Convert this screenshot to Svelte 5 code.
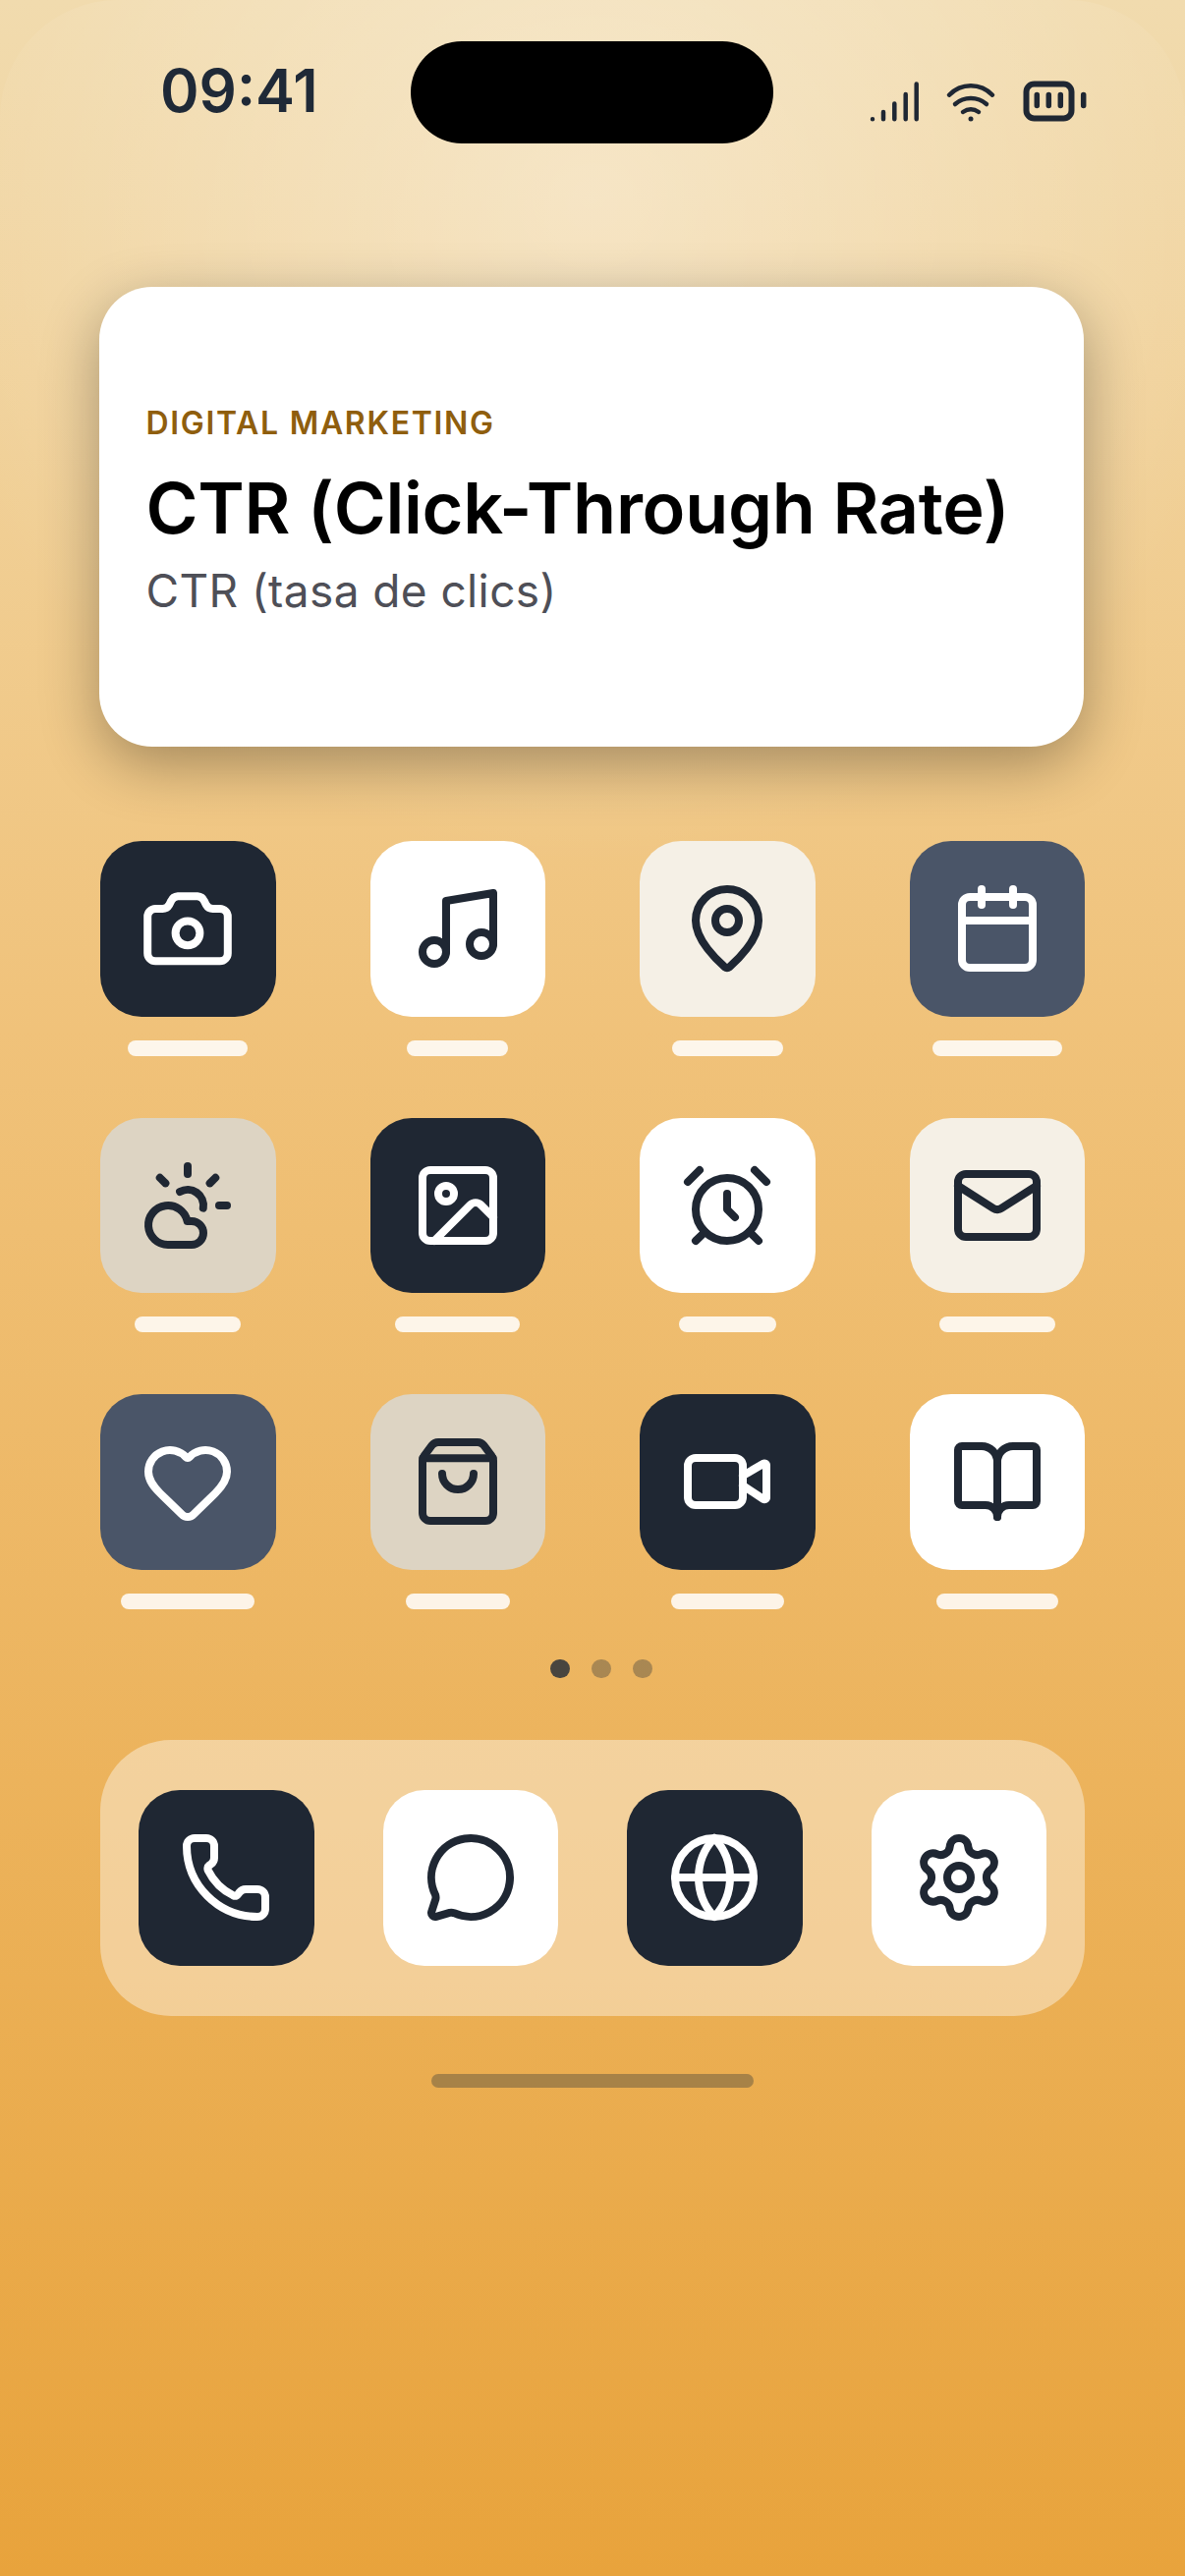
<script>
  const dark = 'dark', slate = 'slate', white = 'white', cream = 'cream', sand = 'sand';

  const icons = {
    camera: '<path d="M3.800 7h1.800a2 2 0 0 0 1.700-1l.5-1A2 2 0 0 1 9.500 3.800h5A2 2 0 0 1 16.200 5l.5 1a2 2 0 0 0 1.700 1h1.800a2 2 0 0 1 2 2v9.300a2 2 0 0 1-2 2H3.800a2 2 0 0 1-2-2V9a2 2 0 0 1 2-2z"/><circle cx="12" cy="13.200" r="3.100"/>',
    music: '<path d="M9 18V5l12-2v13"/><circle cx="6" cy="18" r="3"/><circle cx="18" cy="16" r="3"/>',
    pin: '<path d="M20 10c0 4.993-5.539 10.193-7.399 11.799a1 1 0 0 1-1.202 0C9.539 20.193 4 14.993 4 10a8 8 0 0 1 16 0"/><circle cx="12" cy="10" r="3"/>',
    calendar: '<path d="M8 2v4"/><path d="M16 2v4"/><rect x="3" y="4" width="18" height="18" rx="2"/><path d="M3 10h18"/>',
    weather: '<path d="M12 2v2"/><path d="m4.930 4.930 1.410 1.410"/><path d="M20 12h2"/><path d="m19.070 4.930-1.410 1.410"/><path d="M15.947 12.650a4 4 0 0 0-5.925-4.128"/><path d="M13 22H7a5 5 0 1 1 4.900-6H13a3 3 0 0 1 0 6Z"/>',
    image: '<rect x="3" y="3" width="18" height="18" rx="2"/><circle cx="9" cy="9" r="2"/><path d="m21 15-3.086-3.086a2 2 0 0 0-2.828 0L6 21"/>',
    alarm: '<circle cx="12" cy="13" r="8"/><path d="M12 9v4l2 2"/><path d="M5 3 2 6"/><path d="m22 6-3-3"/><path d="M6.380 18.700 4 21"/><path d="M17.640 18.670 20 21"/>',
    mail: '<rect x="2" y="4" width="20" height="16" rx="2"/><path d="m22 7-8.970 5.700a1.940 1.940 0 0 1-2.060 0L2 7"/>',
    heart: '<path d="M2 9.500a5.500 5.500 0 0 1 9.591-3.676.56.56 0 0 0 .818 0A5.490 5.490 0 0 1 22 9.500c0 2.290-1.500 4-3 5.500l-5.492 5.313a2 2 0 0 1-3 .019L5 15c-1.500-1.500-3-3.200-3-5.500"/>',
    bag: '<path d="M16 10a4 4 0 0 1-8 0"/><path d="M3.103 6.034h17.794"/><path d="M3.400 5.467a2 2 0 0 0-.4 1.200V20a2 2 0 0 0 2 2h14a2 2 0 0 0 2-2V6.667a2 2 0 0 0-.4-1.200l-2-2.667A2 2 0 0 0 17 2H7a2 2 0 0 0-1.600.8z"/>',
    video: '<path d="m16 13 5.223 3.482a.5.5 0 0 0 .777-.416V7.870a.5.5 0 0 0-.752-.432L16 10.500"/><rect x="2" y="6" width="14" height="12" rx="2"/>',
    book: '<path d="M12 7v14"/><path d="M3 18a1 1 0 0 1-1-1V4a1 1 0 0 1 1-1h5a4 4 0 0 1 4 4 4 4 0 0 1 4-4h5a1 1 0 0 1 1 1v13a1 1 0 0 1-1 1h-6a3 3 0 0 0-3 3 3 3 0 0 0-3-3z"/>',
    phone: '<path d="M13.832 16.568a1 1 0 0 0 1.213-.303l.355-.465A2 2 0 0 1 17 15h3a2 2 0 0 1 2 2v3a2 2 0 0 1-2 2A18 18 0 0 1 2 4a2 2 0 0 1 2-2h3a2 2 0 0 1 2 2v3a2 2 0 0 1-.8 1.600l-.468.351a1 1 0 0 0-.292 1.233 14 14 0 0 0 6.392 6.384"/>',
    message: '<path d="M2.992 16.342a2 2 0 0 1 .094 1.167l-1.065 3.290a1 1 0 0 0 1.236 1.168l3.413-.998a2 2 0 0 1 1.099.092 10 10 0 1 0-4.777-4.719"/>',
    globe: '<circle cx="12" cy="12" r="10"/><path d="M12 2a14.500 14.500 0 0 0 0 20 14.500 14.500 0 0 0 0-20"/><path d="M2 12h20"/>',
    settings: '<path d="M9.671 4.136a2.340 2.340 0 0 1 4.659 0 2.340 2.340 0 0 0 3.319 1.915 2.340 2.340 0 0 1 2.330 4.033 2.340 2.340 0 0 0 0 3.831 2.340 2.340 0 0 1-2.330 4.033 2.340 2.340 0 0 0-3.319 1.915 2.340 2.340 0 0 1-4.659 0 2.340 2.340 0 0 0-3.320-1.915 2.340 2.340 0 0 1-2.330-4.033 2.340 2.340 0 0 0 0-3.831A2.340 2.340 0 0 1 6.350 6.051a2.340 2.340 0 0 0 3.319-1.915"/><circle cx="12" cy="12" r="3"/>'
  };

  const apps = [
    { icon: 'camera', tone: dark, bar: 122 },
    { icon: 'music', tone: white, bar: 103 },
    { icon: 'pin', tone: cream, bar: 113 },
    { icon: 'calendar', tone: slate, bar: 132 },
    { icon: 'weather', tone: sand, bar: 108 },
    { icon: 'image', tone: dark, bar: 127 },
    { icon: 'alarm', tone: white, bar: 99 },
    { icon: 'mail', tone: cream, bar: 118 },
    { icon: 'heart', tone: slate, bar: 136 },
    { icon: 'bag', tone: sand, bar: 106 },
    { icon: 'video', tone: dark, bar: 115 },
    { icon: 'book', tone: white, bar: 124 }
  ];

  const dock = [
    { icon: 'phone', tone: dark },
    { icon: 'message', tone: white },
    { icon: 'globe', tone: dark },
    { icon: 'settings', tone: white }
  ];
</script>

{#snippet tile(app)}
  <div class="tile {app.tone}">
    <svg viewBox="0 0 24 24" width="96" height="96" fill="none" stroke="currentColor" stroke-width="2" stroke-linecap="round" stroke-linejoin="round">
      {@html icons[app.icon]}
    </svg>
  </div>
{/snippet}

<div class="screen">
  <header class="status">
    <span class="time">09:41</span>
    <div class="island"></div>
    <div class="indicators">
      <svg viewBox="0 0 50 44" width="50" height="44" fill="none" stroke="#1f2733" stroke-width="4.500" stroke-linecap="round">
        <path d="M3 40.200v.1M14 33v7.300M25.300 24.500v15.800M36.700 15v25.300M47.700 4.500v35.800" />
      </svg>
      <svg viewBox="0 0 52 44" width="52" height="44" fill="none" stroke="#1f2733" stroke-width="4.500" stroke-linecap="round">
        <path d="M4 15.700C16 3 36 3 48 15.700M10 25c9-8 23-8 32 0M18 33c5-3.500 11-3.500 16 0" />
        <path d="M26 40v.1" stroke-width="5" />
      </svg>
      <svg viewBox="0 0 66 44" width="66" height="44" fill="none" stroke="#1f2733" stroke-linecap="round">
        <rect x="3.500" y="4.500" width="46" height="35" rx="8" stroke-width="6" />
        <path d="M14.300 15.500v11M26.300 15.500v11M38.300 15.500v11M61.700 15.500v11" stroke-width="5.500" />
      </svg>
    </div>
  </header>

  <main class="content">
    <section class="card">
      <p class="category">DIGITAL MARKETING</p>
      <h1>CTR (Click-Through Rate)</h1>
      <p class="translation">CTR (tasa de clics)</p>
    </section>

    <div class="grid">
      {#each apps as app}
        <div class="app">
          {@render tile(app)}
          <span class="bar" style="width: {app.bar}px"></span>
        </div>
      {/each}
    </div>

    <div class="dots">
      <span class="dot current"></span>
      <span class="dot"></span>
      <span class="dot"></span>
    </div>

    <div class="dock">
      {#each dock as app}
        {@render tile(app)}
      {/each}
    </div>

    <div class="home"></div>
  </main>
</div>

<style>
  :global(body) {
    margin: 0;
  }

  .screen {
    position: relative;
    box-sizing: border-box;
    height: 2622px;
    overflow: hidden;
    font-family: Inter, 'Liberation Sans', sans-serif;
    background: linear-gradient(180deg, #f1dbae 0%, #f0c27a 40%, #e8a33c 100%);
  }

  .screen::before {
    content: '';
    position: absolute;
    inset: 0;
    border-radius: 120px;
    background: radial-gradient(ellipse 700px 680px at 50% 200px, rgba(255, 255, 255, 0.36) 0%, rgba(255, 255, 255, 0) 100%);
  }

  .status {
    position: relative;
    display: grid;
    grid-template-columns: 1fr 369px 1fr;
    padding-top: 42px;
    height: 104px;
  }

  .time {
    align-self: center;
    padding-left: 163px;
    font-size: 60px;
    font-weight: 600;
    line-height: 1;
    color: #1f2937;
    margin-top: -4px;
  }

  .island {
    height: 104px;
    margin-left: -1px;
    margin-right: 1px;
    border-radius: 52px;
    background: #000;
  }

  .indicators {
    display: flex;
    justify-content: flex-end;
    align-items: flex-start;
    gap: 27px;
    padding: 39px 99px 0 0;
  }

  .content {
    position: relative;
    display: flex;
    flex-direction: column;
    padding: 146px 102px 0;
  }

  .card {
    box-sizing: border-box;
    height: 468px;
    margin-left: -1.500px;
    margin-right: 1.500px;
    padding: 0 48px 12px;
    display: flex;
    flex-direction: column;
    justify-content: center;
    border-radius: 54px;
    background: #fff;
    box-shadow: 0 18px 60px rgba(0, 0, 0, 0.32);
  }

  .category {
    margin: 0;
    font-size: 32px;
    font-weight: 600;
    line-height: 40px;
    letter-spacing: 1.700px;
    color: #8f5e0d;
  }

  h1 {
    margin: 20.400px 0 0;
    font-size: 72px;
    font-weight: 600;
    line-height: 90px;
    letter-spacing: -0.280px;
    color: #000;
  }

  .translation {
    margin: 10.700px 0 0;
    font-size: 46px;
    font-weight: 400;
    line-height: 56px;
    letter-spacing: 0.400px;
    color: #4e4f57;
  }

  .grid {
    display: grid;
    grid-template-columns: repeat(4, 1fr);
    column-gap: 96px;
    row-gap: 63px;
    margin-top: 96px;
  }

  .app {
    display: flex;
    flex-direction: column;
    align-items: center;
    gap: 24px;
  }

  .tile {
    width: 178.500px;
    height: 178.500px;
    flex: none;
    display: flex;
    align-items: center;
    justify-content: center;
    border-radius: 42px;
    color: #1f2733;
  }

  .tile.dark {
    background: #1f2733;
    color: #fff;
  }

  .tile.slate {
    background: #4a5568;
    color: #fff;
  }

  .tile.white {
    background: #fff;
  }

  .tile.cream {
    background: #f5f0e6;
  }

  .tile.sand {
    background: #ddd4c3;
  }

  .bar {
    height: 16px;
    border-radius: 8px;
    background: rgba(255, 255, 255, 0.85);
  }

  .dots {
    display: flex;
    justify-content: center;
    gap: 22.500px;
    margin-top: 51px;
    padding-left: 18px;
  }

  .dot {
    width: 19.500px;
    height: 19.500px;
    border-radius: 50%;
    background: rgba(31, 41, 55, 0.33);
  }

  .dot.current {
    background: rgba(31, 41, 55, 0.8);
  }

  .dock {
    display: flex;
    gap: 70px;
    margin-top: 62.500px;
    padding: 51.500px 39px;
    border-radius: 72px;
    background: rgba(255, 255, 255, 0.4);
  }

  .home {
    align-self: center;
    width: 328px;
    height: 14px;
    margin-top: 59px;
    border-radius: 7px;
    background: rgba(31, 41, 55, 0.33);
  }
</style>
